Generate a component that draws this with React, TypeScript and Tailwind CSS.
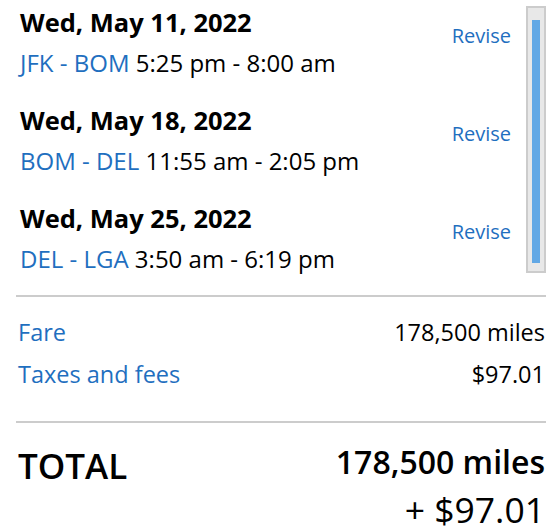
import React from 'react';

const flights = [
  { date: "Wed, May 11, 2022", route: "JFK - BOM", time: "5:25 pm - 8:00 am" },
  { date: "Wed, May 18, 2022", route: "BOM - DEL", time: "11:55 am - 2:05 pm" },
  { date: "Wed, May 25, 2022", route: "DEL - LGA", time: "3:50 am - 6:19 pm" },
];

export default function App() {
  return (
    <div className="w-[556px] h-[531px] bg-white overflow-hidden text-black font-['Open_Sans',sans-serif]">
      <div className="flex pl-[20px] pr-[10px] pt-[6px]">
        <div className="flex-1 h-[267px]">
          {flights.map((f) => (
            <div key={f.date} className="flex h-[98px] pr-[15px]">
              <div className="flex-1">
                <div className="text-[25.5px] font-bold leading-[32px]">{f.date}</div>
                <div className="text-[24px] leading-[28px] mt-[11px]">
                  <span className="text-[#1f6fbf]">{f.route}</span> {f.time}
                </div>
              </div>
              <div className="text-[20px] leading-[28px] mt-[16px] text-[#1f6fbf]">Revise</div>
            </div>
          ))}
        </div>
        <div className="w-[20px] h-[267px] border-2 border-[#cccccc] bg-[#e8e8e8] px-[4px] pt-[12px]">
          <div className="h-[243px] bg-[#62a8e5]"></div>
        </div>
      </div>

      <div className="ml-[16px] mr-[10px] mt-[22px] border-t-2 border-[#cccccc]"></div>

      <div className="ml-[16px] mr-[11px] pt-[20px] pb-[32px]">
        <div className="flex justify-between text-[23.5px] leading-[30px]">
          <span className="text-[#1f6fbf] pl-[2px]">Fare</span>
          <span>178,500 miles</span>
        </div>
        <div className="flex justify-between text-[23.5px] leading-[30px] mt-[12px]">
          <span className="text-[#1f6fbf] pl-[2px]">Taxes and fees</span>
          <span>$97.01</span>
        </div>
      </div>

      <div className="ml-[16px] mr-[10px] border-t-2 border-[#cccccc]"></div>

      <div className="ml-[16px] mr-[11px] pt-[19px] flex justify-between">
        <div className="text-[35px] font-semibold leading-[44px] mt-[2px] pl-[2px]">TOTAL</div>
        <div className="text-right">
          <div className="text-[32px] font-semibold leading-[40px]">178,500 miles</div>
          <div className="text-[35.5px] leading-[40px] mt-[7px]">+ $97.01</div>
        </div>
      </div>
    </div>
  );
}
